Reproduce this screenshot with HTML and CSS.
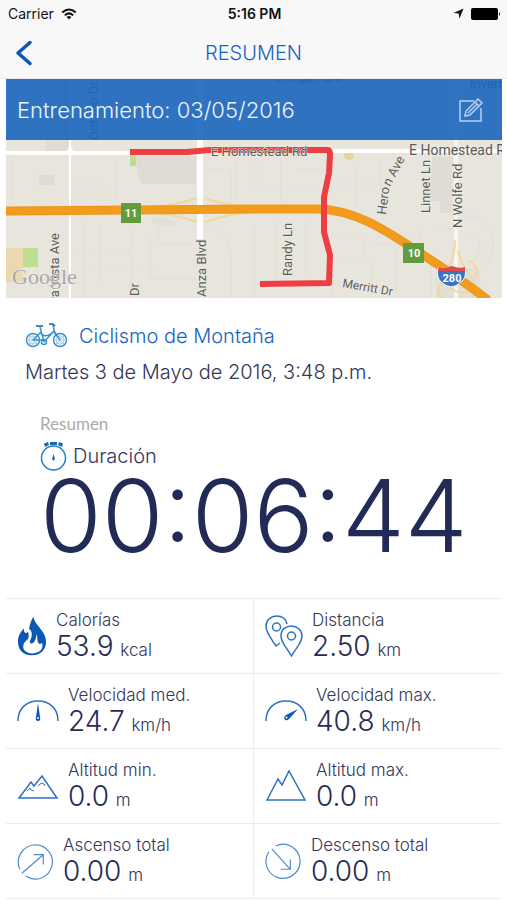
FILE: index.html
```html
<!DOCTYPE html>
<html lang="es">
<head>
<meta charset="utf-8">
<meta name="viewport" content="width=device-width, initial-scale=1">
<title>Resumen</title>
<link rel="stylesheet" href="styles.css">
</head>
<body>
<header class="top">
  <div class="status">
    <div class="carrier">Carrier
      <svg width="16" height="12" viewBox="0 0 16 12" aria-hidden="true"><g fill="none" stroke="#111" stroke-width="2"><path d="M1.2 4.6Q8-1.6 14.8 4.6"/><path d="M3.8 7.4Q8 3.4 12.2 7.4"/></g><path d="M5.6 9Q8 6.8 10.4 9L8 11.5Z" fill="#111"/></svg>
    </div>
    <div class="clock">5:16 PM</div>
    <div class="power">
      <svg width="11" height="11" viewBox="0 0 11 11" aria-hidden="true"><path d="M10.5.5 6.4 10.8 5.7 5.6.5 5Z" fill="#111"/></svg>
      <svg width="30" height="12" viewBox="0 0 30 12" aria-hidden="true"><rect width="27" height="12" rx="2"/><path d="M28 4q2 2 0 4Z"/></svg>
    </div>
  </div>
  <nav class="bar">
    <button class="back" aria-label="Atrás"><svg width="20" height="26" viewBox="0 0 20 26"><path d="M16 2.500 4 13 16 23.500" fill="none" stroke="#0c57b4" stroke-width="3.500" stroke-linecap="round" stroke-linejoin="round"/></svg></button>
    <h1>RESUMEN</h1>
  </nav>
</header>
<main>
  <section class="map">
    <svg class="map-art" viewBox="0 0 496 219" role="img" aria-label="Mapa del recorrido">
      <rect width="496" height="219" fill="#e8e6dc"/>
      <g fill="#dedcd4">
        <path d="M40 0H64V70Q60 75 40 74ZM130 77H190V105H136Q130 95 130 77ZM33 96H48V106H33ZM426 78H446V134H434V122H424Z"/>
        <path d="M146 139Q170 139 168 146Q158 148 146 144ZM430 190H474V219H430Z" opacity=".7"/>
      </g>
      <path d="M0 169H17V203H0Z" fill="#ead9ae"/><path d="M17 169H32V188H17ZM124 76H130V87H124Z" fill="#bddc94"/>
      <ellipse cx="343" cy="77" rx="5" ry="4" fill="#e4d5a0"/>
      <g fill="none" stroke="#e0dfd6" stroke-width="1">
        <path d="M5 76V125M66 99H92M110 77V125M66 113H110M78 140V219M94 145V205M66 172H125M78 191H150M125 150V219M144 160V200H190M152 148V165H190"/>
        <path d="M202 90H225V125M230 80V124M250 78V110H315M275 77V128M290 90H318M205 150Q225 150 225 180V219M248 145V219M270 140V200M300 140V198M325 180H365V215M330 155H357V180M335 105H380M350 85V128M375 78V120"/>
        <path d="M458 140Q475 130 485 155Q493 175 476 190M465 155Q480 160 470 180M430 150H448M415 150V170M325 198V219M365 165H390V215M399 180H425V219"/>
      </g>
      <g fill="none" stroke="#fff">
        <path d="M0 74H124L240 72H496" stroke-width="4"/>
        <path d="M64 0V219" stroke-width="2"/><path d="M194 0V160" stroke-width="6"/><path d="M450 0V219" stroke-width="4" stroke="#f6f5f1"/><path d="M60 74 64 67 68 74" fill="#fff" stroke-width="1"/>
      </g>
      <g fill="none" stroke="#f2d79b" stroke-width="2"><path d="M142 129Q170 126 191 119M142 134Q165 134 191 143M199 119Q222 127 250 129M199 143Q225 134 250 133"/><path d="M449 161Q449 180 438 198T437 219M452 172Q455 184 463 195Q475 210 466 219M463 181Q473 188 470 198M442 207Q457 220 474 208"/></g>
      <g fill="none"><path d="M0 132 247 130H310C355 130 390 159 434 187Q460 204 482 221" stroke="#e8981f" stroke-width="9"/><path d="M0 132 247 130H310C355 130 390 159 434 187Q460 204 482 221" stroke="#f29b1c" stroke-width="7"/></g>
      <path d="M124 73 181 73 204 71H322Q324 71 324 76L323 94 318 118V153L324 176 323 204 254 205" fill="none" stroke="#ee3d43" stroke-width="6" stroke-linejoin="round"/>
      <g class="street">
        <text x="205" y="77">E Homestead Rd</text><text class="major" x="403" y="76">E Homestead R</text>
        <text transform="translate(380 136) rotate(-83)">Hero</text><text transform="translate(384 108) rotate(-62)">n Ave</text>
        <text transform="translate(424 134) rotate(-90)">Linnet Ln</text><text transform="translate(456 149) rotate(-90)">N Wolfe Rd</text>
        <text transform="translate(286 197) rotate(-90)">Randy Ln</text><text class="minor" transform="translate(336 208) rotate(10)">Merritt Dr</text>
        <text transform="translate(200 218) rotate(-90)">Anza Blvd</text><text transform="translate(133 217) rotate(-90)">Dr</text>
        <text transform="translate(53 154) rotate(-90)" text-anchor="end">ora Vista Ave</text><text transform="translate(92 61) rotate(-90)">Ontario Dr</text>
        <text x="267" y="3">Ortega Park</text><text x="464" y="9">Inverr</text>
      </g>
      <rect x="115" y="124" width="20" height="20" fill="#639c3e"/><rect x="397" y="164" width="21" height="20" fill="#639c3e"/>
      <path d="M432 189H459Q461 199 455 203Q450 208 445 208Q439 207 435 203Q430 198 432 189Z" fill="#3b73c4" stroke="#fff" stroke-width="1"/><path d="M433 188Q439 190 446 187Q453 190 459 188V192H432Z" fill="#dd4c4a"/>
      <g class="shield"><text x="125" y="138">11</text><text x="408" y="178">10</text><text x="446" y="203">280</text></g>
      <text class="google" x="6" y="205">Google</text>
    </svg>
    <div class="caption">
      <h2>Entrenamiento: 03/05/2016</h2>
      <button aria-label="Editar"><svg width="26" height="26" viewBox="0 0 26 26" fill="none" stroke="#b9d2ee" stroke-width="1.500"><path d="M16 4H2V24H23V11"/><path d="M7 19 8 14 20 2 24 6 12 18ZM17 5 21 9M10 16 19 7"/></svg></button>
    </div>
  </section>
  <section class="activity">
    <div class="sport">
      <svg width="43" height="28" viewBox="0 0 43 28" fill="none" stroke="#3b92cb"><g stroke-width="1.500"><circle cx="8" cy="18" r="6.500"/><circle cx="35" cy="18" r="6.500"/></g><g stroke="#a5d0ea" stroke-width="1"><circle cx="8" cy="18" r="4"/><circle cx="35" cy="18" r="4"/><path d="M8 12V24M2 18H14M4 14 12 22M4 22 12 14M35 12V24M29 18H41M31 14 39 22M31 22 39 14"/></g><path d="M8 18 15 11M8 18H18M15 5 19 20M15 10Q20 18 29 9L35 18M19 20 29 9M28 3 30 12" stroke-width="1.500"/><path d="M11 4H18M24 2H28L30 4" stroke="#13659f" stroke-width="1.500"/><circle cx="19" cy="20" r="2.500" stroke-width="1.500"/></svg>
      <h3>Ciclismo de Montaña</h3>
    </div>
    <p class="date">Martes 3 de Mayo de 2016, 3:48 p.m.</p>
  </section>
  <section class="duration">
    <h4>Resumen</h4>
    <div class="duration-label">
      <svg width="28" height="30" viewBox="0 0 28 30"><circle cx="13.500" cy="17" r="12" fill="none" stroke="#2480c2" stroke-width="1.500"/><path d="M4 2.500 8 1 9 4 5 6ZM10 1H17V4H10ZM19 1 23 2.500 22 6 18 4Z" fill="#176ca9"/><path d="M13.500 13 15 18Q13.500 21 12 18Z" fill="#176ca9"/></svg>
      <span>Duración</span>
    </div>
    <div class="time">00:06:44</div>
  </section>
  <section class="stats">
    <div class="stat">
      <svg width="30" height="42" viewBox="0 0 31 42"><path d="M17 1C18 10 30 15 30 27C30 36 24 41 15 41C6 41 1 35 1 27C1 20 4 17 7 13C7 17 8 18 10 18C14 14 12 8 17 1Z" fill="#0b59b5"/><path d="M15 39C8 38 5 34 7 29C9 25 13 25 12 20C12 16 10 14 9 12C15 14 17 18 14 25C12 28 14 30 17 28C19 26 20 23 20 19C22 23 20 27 23 29C25 30 25 27 26 29C28 34 23 39 15 39Z" fill="#fff"/></svg>
      <div><h5>Calorías</h5><p><b>53.9</b> kcal</p></div>
    </div>
    <div class="stat">
      <svg width="38" height="42" viewBox="0 0 38 42" fill="none" stroke="#2c72c3" stroke-width="1.500"><path d="M15 28 11 31C6 23 1 18 1 11C1 5 6 1 11.500 1C17 1 21 4 22 9"/><circle cx="11.500" cy="12" r="4"/><path d="M26.500 41C22 33 16 28 16 21C16 14 21 11 26.500 11C32 11 37 15 37 21C37 28 31 33 26.500 41Z"/><circle cx="26.500" cy="21" r="4"/></svg>
      <div><h5>Distancia</h5><p><b>2.50</b> km</p></div>
    </div>
    <div class="stat">
      <svg width="42" height="24" viewBox="0 0 42 24"><path d="M1 22C1 9 10 2 21 2S41 9 41 22" fill="none" stroke="#2c72c3" stroke-width="1.500"/><path d="M21 4 23 18Q24 22 21 22T19 18Z" fill="#0b59b5"/><circle cx="21" cy="19" r="1" fill="#fff"/></svg>
      <div><h5>Velocidad med.</h5><p><b>24.7</b> km/h</p></div>
    </div>
    <div class="stat">
      <svg width="42" height="24" viewBox="0 0 42 24"><path d="M1 22C1 9 10 2 21 2S41 9 41 22" fill="none" stroke="#2c72c3" stroke-width="1.500"/><path d="M33 10 24 20Q22 22 20 21Q18 18 21 16Z" fill="#0b59b5"/><circle cx="21.500" cy="18.500" r="1" fill="#fff"/></svg>
      <div><h5>Velocidad max.</h5><p><b>40.8</b> km/h</p></div>
    </div>
    <div class="stat">
      <svg width="42" height="30" viewBox="0 0 42 30" fill="none" stroke="#2c72c3" stroke-width="1.500"><path d="M2 27 14 11 17 15 25 5 40 27Z"/><path d="M10 20 13 17 14 19 17 20M21 15 23 13 25 12 27 13 28 15" stroke-width="1"/></svg>
      <div><h5>Altitud min.</h5><p><b>0.0</b> m</p></div>
    </div>
    <div class="stat">
      <svg width="42" height="32" viewBox="0 0 42 32" fill="none" stroke="#2c72c3" stroke-width="1.500"><path d="M2 30 13 9 17 15 24 1 40 30Z"/></svg>
      <div><h5>Altitud max.</h5><p><b>0.0</b> m</p></div>
    </div>
    <div class="stat">
      <svg width="37" height="37" viewBox="0 0 38 38" fill="none" stroke="#4a8ad0" stroke-width="1.200"><path d="M3 27A17.500 17.500 0 1 1 9 34"/><path d="M5 31 27 12M17 12H27V22"/></svg>
      <div><h5>Ascenso total</h5><p><b>0.00</b> m</p></div>
    </div>
    <div class="stat">
      <svg width="37" height="37" viewBox="0 0 38 38" fill="none" stroke="#4a8ad0" stroke-width="1.200"><path d="M4 9A17.500 17.500 0 1 0 11 3"/><path d="M7 6 26 27M16 27H26V17"/></svg>
      <div><h5>Descenso total</h5><p><b>0.00</b> m</p></div>
    </div>
  </section>
</main>
</body>
</html>
```
FILE: styles.css
```css
* { box-sizing: border-box; }
body { margin: 0; background: #fff; color: #343659; font-family: Inter, "Liberation Sans", sans-serif; font-weight: 300; }
h1, h2, h3, h4, h5, p { margin: 0; font-size: inherit; font-weight: inherit; }
button { display: flex; padding: 0; border: 0; background: none; cursor: pointer; }
svg { display: block; flex: none; }

.top { background: #f8f8f8; border-bottom: 1px solid #ececec; }
.status { display: grid; grid-template-columns: 1fr auto 1fr; align-items: center; height: 27px; padding: 0 6px 0 8px; color: #111; font-size: 14px; font-weight: 400; }
.carrier, .power { display: flex; align-items: center; gap: 7px; }
.power { justify-content: flex-end; }
.clock { font-weight: 600; }
.bar { display: grid; grid-template-columns: 1fr auto 1fr; align-items: center; height: 51px; padding: 0 14px; }
.bar h1 { color: #1763bd; font-size: 20px; }

main { padding: 0 5px 0 6px; }
.map { position: relative; }
.map-art { width: 100%; height: auto; }
.street { fill: #5b5b58; font: 400 13px Roboto, sans-serif; stroke: #efede6; stroke-width: 1px; paint-order: stroke; }
.major { font-size: 14px; }
.minor { font-size: 12px; }
.shield { fill: #fff; font: 700 11px Roboto, sans-serif; text-anchor: middle; }
.google { fill: #a7a6a2; font: 400 22px "Liberation Serif", serif; stroke: #f4f2ec; stroke-width: 1px; paint-order: stroke; }
.caption { position: absolute; top: 0; left: 0; right: 0; display: flex; align-items: center; justify-content: space-between; height: 61px; padding: 0 18px 0 11px; background: rgba(26, 101, 189, .9); color: #eef5fd; }
.caption h2 { font-size: 22px; }

.activity { padding: 24px 19px 0; }
.sport { display: flex; align-items: center; gap: 11px; height: 28px; color: #1763bd; font-size: 20px; }
.date { margin-top: 8px; font-size: 20px; line-height: 28px; }
.duration { padding: 26px 34px 0; }
.duration h4 { color: #aaa; font: 400 17px/24px Lato, sans-serif; }
.duration-label { display: flex; align-items: center; gap: 5px; height: 40px; font-size: 20px; }
.time { color: #222b56; font-size: 100px; line-height: 80px; white-space: nowrap; }

.stats { display: grid; grid-template-columns: 1fr 1fr; margin-top: 42px; border-top: 1px solid #ececef; }
.stat { display: flex; align-items: center; gap: 9px; height: 75px; padding: 0 11px; border-bottom: 1px solid #ececef; }
.stat:nth-child(odd) { border-right: 1px solid #ececef; }
.stat h5 { font-size: 17px; line-height: 24px; }
.stat p { font-size: 17px; line-height: 28px; }
.stat b { margin-right: 2px; color: #282c55; font-size: 28px; font-weight: 300; }
```
